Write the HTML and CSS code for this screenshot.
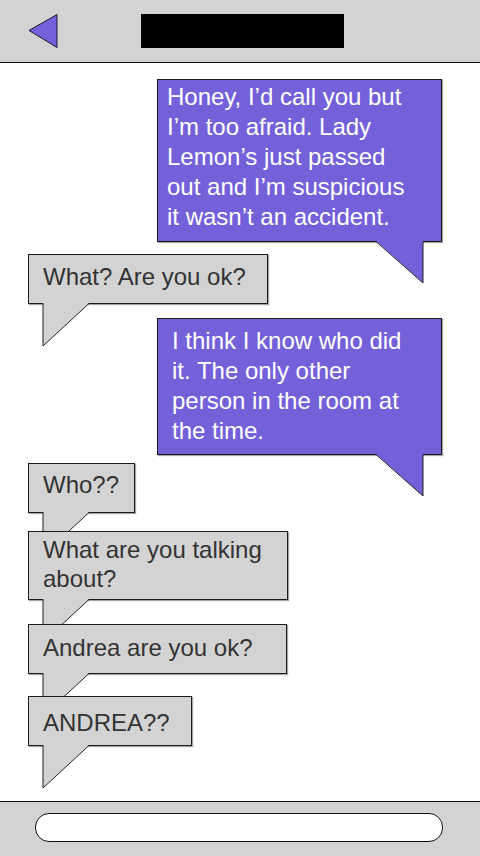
FILE: index.html
```html
<!DOCTYPE html>
<html lang="en">
<head>
<meta charset="utf-8">
<title>Chat</title>
<link rel="stylesheet" href="styles.css">
</head>
<body>
<div class="app">
  <header class="topbar">
    <button class="back" aria-label="Back">
      <svg width="30" height="35" viewBox="0 0 30 35"><polygon points="1,16.5 29,0.5 29,33.5" fill="#7461d9" stroke="#1a1a2e" stroke-width="1"/></svg>
    </button>
    <div class="title-block"></div>
  </header>

  <main class="thread">
    <div class="msg out m1">
      <p>Honey, I’d call you but I’m too afraid. Lady Lemon’s just passed out and I’m suspicious it wasn’t an accident.</p>
      <svg class="tail tail-out" width="48" height="43" viewBox="0 0 48 43"><polygon points="0,0 47,0 47,42" fill="#7461d9"/><polyline points="0,0.5 47,42 47,1" fill="none" stroke="#222" stroke-width="1"/></svg>
    </div>

    <div class="msg in m2">
      <p>What? Are you ok?</p>
      <svg class="tail tail-in" width="48" height="44" viewBox="0 0 48 44"><polygon points="1,0 47,0 1,43" fill="#d3d3d3"/><polyline points="1,0 1,43 47,0.5" fill="none" stroke="#222" stroke-width="1"/></svg>
    </div>

    <div class="msg out m3">
      <p>I think I know who did it. The only other person in the room at the time.</p>
      <svg class="tail tail-out" width="48" height="43" viewBox="0 0 48 43"><polygon points="0,0 47,0 47,42" fill="#7461d9"/><polyline points="0,0.5 47,42 47,1" fill="none" stroke="#222" stroke-width="1"/></svg>
    </div>

    <div class="msg in m4">
      <p>Who??</p>
      <svg class="tail tail-in" width="48" height="44" viewBox="0 0 48 44"><polygon points="1,0 47,0 1,43" fill="#d3d3d3"/><polyline points="1,0 1,43 47,0.5" fill="none" stroke="#222" stroke-width="1"/></svg>
    </div>

    <div class="msg in m5">
      <p>What are you talking about?</p>
      <svg class="tail tail-in" width="48" height="44" viewBox="0 0 48 44"><polygon points="1,0 47,0 1,43" fill="#d3d3d3"/><polyline points="1,0 1,43 47,0.5" fill="none" stroke="#222" stroke-width="1"/></svg>
    </div>

    <div class="msg in m6">
      <p>Andrea are you ok?</p>
      <svg class="tail tail-in" width="48" height="44" viewBox="0 0 48 44"><polygon points="1,0 47,0 1,43" fill="#d3d3d3"/><polyline points="1,0 1,43 47,0.5" fill="none" stroke="#222" stroke-width="1"/></svg>
    </div>

    <div class="msg in m7">
      <p>ANDREA??</p>
      <svg class="tail tail-in" width="48" height="44" viewBox="0 0 48 44"><polygon points="1,0 47,0 1,43" fill="#d3d3d3"/><polyline points="1,0 1,43 47,0.5" fill="none" stroke="#222" stroke-width="1"/></svg>
    </div>
  </main>

  <footer class="composer">
    <div class="input"></div>
  </footer>
</div>
</body>
</html>
```

FILE: styles.css
```css
* { box-sizing: border-box; }

html, body {
  margin: 0;
  padding: 0;
  background: #ffffff;
}

body {
  font-family: "Liberation Sans", Arial, sans-serif;
}

.app {
  width: 480px;
  height: 856px;
  display: flex;
  flex-direction: column;
  overflow: hidden;
}

.topbar {
  height: 63px;
  flex: 0 0 63px;
  background: #d3d3d3;
  border-bottom: 1px solid #111;
  display: flex;
  align-items: center;
  padding-left: 28px;
}

.back {
  background: none;
  border: 0;
  padding: 0;
  margin: 0;
  width: 30px;
  height: 35px;
  display: block;
}

.back svg { display: block; }

.title-block {
  width: 203px;
  height: 34px;
  background: #000;
  margin-left: 83px;
}

.thread {
  flex: 1;
  display: flex;
  flex-direction: column;
  align-items: flex-start;
  padding-top: 16px;
}

.msg {
  position: relative;
  border: 1px solid #1a1a1a;
  box-shadow: 1px 1px 1px rgba(0, 0, 0, 0.35);
  font-size: 24px;
}

.msg p {
  margin: 0;
}

.out {
  align-self: flex-end;
  margin-right: 38px;
  width: 285px;
  background: #7461d9;
  color: #ffffff;
  line-height: 30px;
  padding: 2px 20px 8px 10px;
}

.in {
  margin-left: 28px;
  min-height: 50px;
  background: #d3d3d3;
  color: #333333;
  line-height: 29px;
  padding: 7px 14px 5px 14px;
}

.tail {
  position: absolute;
  top: 100%;
  display: block;
}

.tail-out { left: 218px; }
.tail-in { left: 13px; }

.m1 { margin-top: 0; height: 163px; padding-left: 9px; }
.m2 { margin-top: 12px; width: 240px; }
.m3 { margin-top: 14px; height: 137px; padding-top: 7px; padding-left: 14px; }
.m4 { margin-top: 8px; width: 107px; padding-top: 6px; }
.m5 { margin-top: 18px; width: 260px; height: 69px; padding-top: 3px; padding-bottom: 6px; }
.m6 { margin-top: 24px; width: 259px; padding-top: 8px; }
.m7 { margin-top: 22px; width: 164px; padding-top: 11px; }

.composer {
  flex: 0 0 55px;
  height: 55px;
  background: #d3d3d3;
  border-top: 1px solid #111;
  padding: 11px 0 0 35px;
}

.input {
  width: 408px;
  height: 29px;
  background: #ffffff;
  border: 1px solid #111;
  border-radius: 14px;
}
```
